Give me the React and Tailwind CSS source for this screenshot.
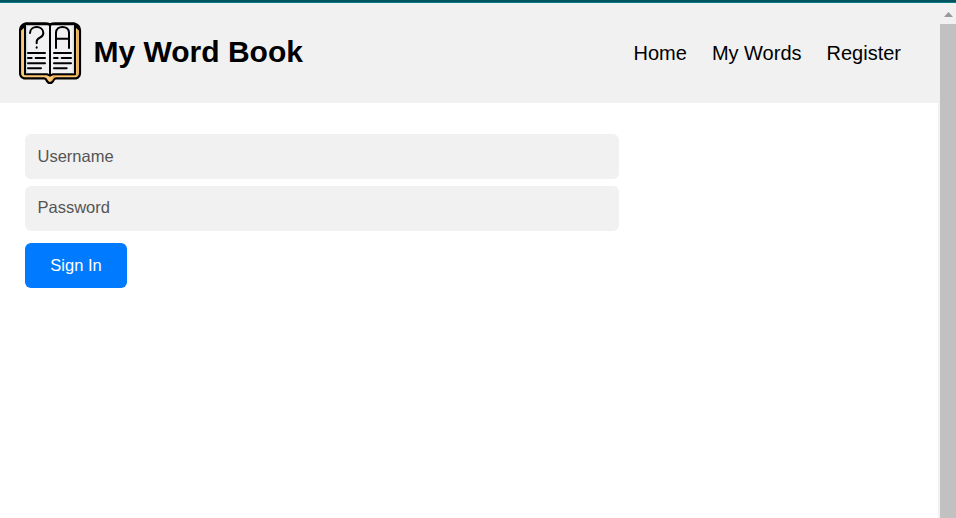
function BookLogo() {
  return (
    <svg viewBox="27 24 189 189" className="h-[63px] w-[63px] shrink-0" fill="none" strokeLinecap="round" strokeLinejoin="round">
      <path d="M48 28H105Q115 28 120 31Q125 28 135 28H192Q209 33 210 48V178Q209 190 198 193H138Q132 194 131 198Q127 207 120 207Q113 207 109 198Q108 194 102 193H42Q31 190 30 178V48Q31 33 48 28Z" fill="#fbc878" stroke="#000" strokeWidth="6.5" />
      <path d="M202 50V184H134L126 198" stroke="#efaa4c" strokeWidth="4" />
      <path d="M32 48Q34 31 48 29H192Q206 31 208 48L197 38H43Z" fill="#000" stroke="#000" strokeWidth="4" />
      <path d="M45 31H110Q116 30 120 34Q124 30 130 31H195V181H128L120 185L112 181H45Z" fill="#f1f1f3" stroke="#000" strokeWidth="6" />
      <path d="M50 36V176M190 36V176" stroke="#d5d9e1" strokeWidth="4" />
      <path d="M120 32V184" stroke="#000" strokeWidth="6" />
      <path d="M60 57C61 33 99 33 100 57C101 72 80 70 80 83V88M80 100V101M138 102V56C138 33 177 33 177 56V102M138 74H177" stroke="#000" strokeWidth="6" />
      <path d="M54 117H105M54 132H65M77 132H105M54 148H105M54 163H93M132 117H183M132 132H143M155 132H183M132 148H183M132 163H170" stroke="#000" strokeWidth="6" />
    </svg>
  );
}

function Field({ type, label }) {
  return (
    <input
      type={type}
      placeholder={label}
      aria-label={label}
      className="h-[45px] w-[594px] rounded-md bg-[#f1f1f1] px-[12.5px] text-[16.5px] text-black outline-none placeholder:text-[#555] last:pb-[2px]"
    />
  );
}

export default function App() {
  return (
    <div className="flex h-[518px] w-[956px] flex-col overflow-hidden bg-white font-['Liberation_Sans',Arial,sans-serif] text-black">
      <div className="h-[3px] shrink-0 border-b border-[#087b84] bg-[#03545f]" />
      <div className="flex min-h-0 flex-1">
        <div className="min-w-0 flex-1">
          <header className="flex h-[100px] items-center justify-between bg-[#f1f1f1] pr-[37px] pl-[19px]">
            <div className="flex items-center gap-[11.5px]">
              <BookLogo />
              <h1 className="pb-[2px] text-[30px] leading-9 font-bold whitespace-nowrap">My Word Book</h1>
            </div>
            <nav className="flex gap-[25px] text-xl whitespace-nowrap">
              <a href="#home">Home</a>
              <a href="#words">My Words</a>
              <a href="#register">Register</a>
            </nav>
          </header>
          <form className="flex flex-col items-start pt-[31px] pl-[25px]">
            <div className="flex flex-col gap-[7px]">
              <Field type="text" label="Username" />
              <Field type="password" label="Password" />
            </div>
            <button type="button" className="mt-3 h-[45px] w-[102px] rounded-md bg-[#007bff] text-[16.5px] text-white">
              Sign In
            </button>
          </form>
        </div>
        <div className="flex w-[18px] flex-col bg-[#f1f1f1] pl-[2px]">
          <div className="flex h-[21px] shrink-0 items-center justify-center">
            <svg viewBox="0 0 9 5" className="mt-[2px] h-[5px] w-[9px]">
              <path d="M0 5L4.5 0L9 5Z" fill="#989898" />
            </svg>
          </div>
          <div className="flex-1 bg-[#c1c1c1]" />
        </div>
      </div>
    </div>
  );
}
